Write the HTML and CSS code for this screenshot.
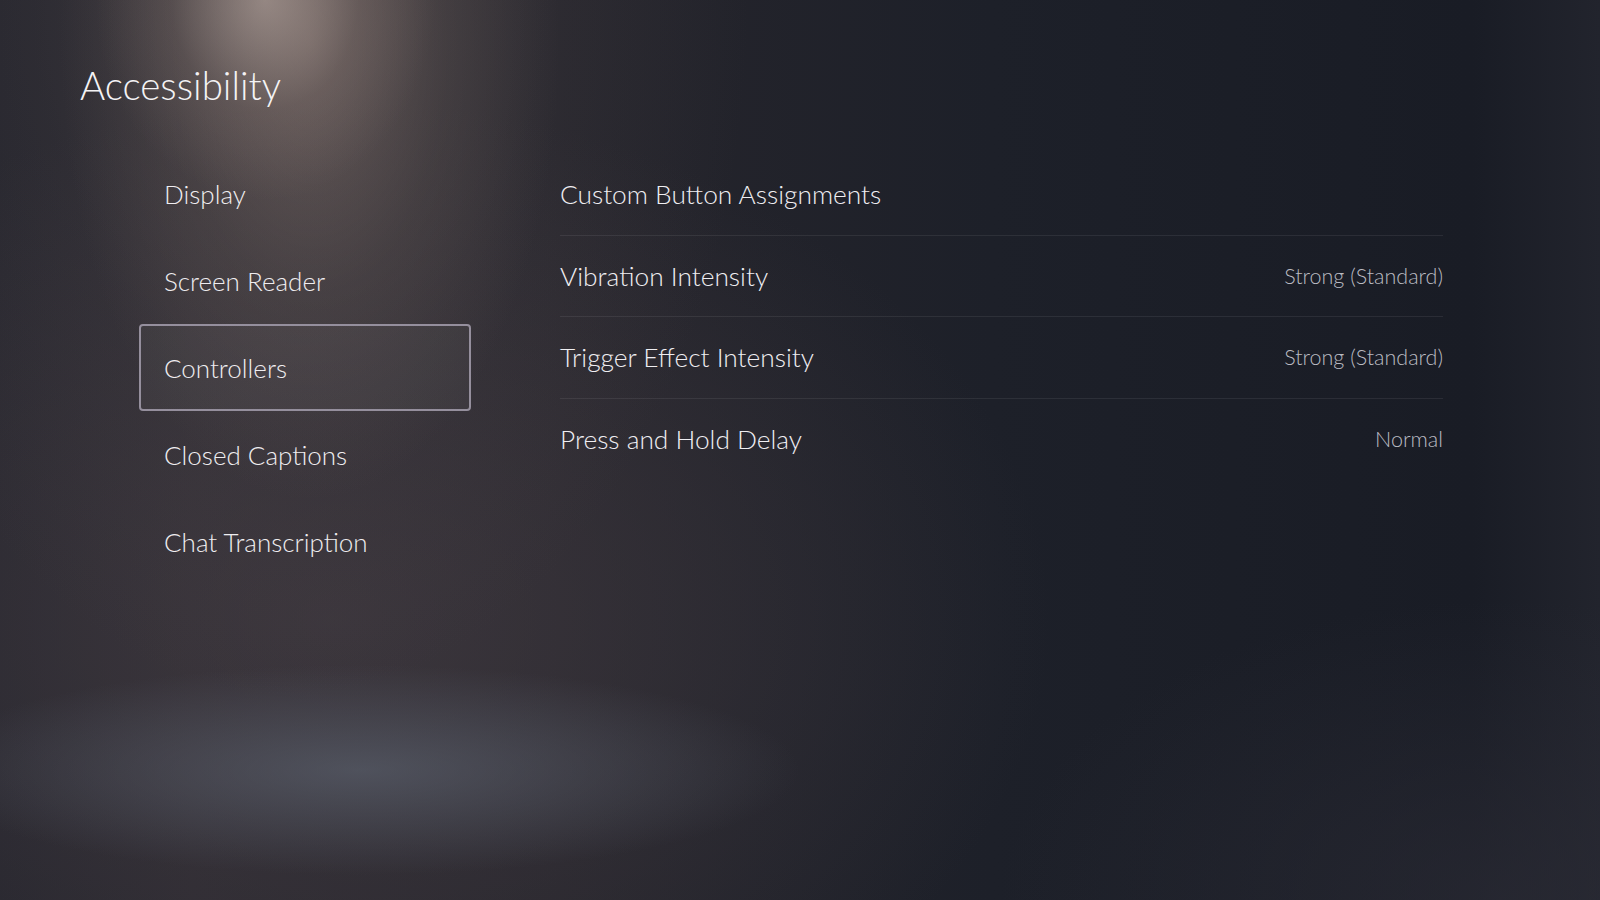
FILE: index.html
```html
<!DOCTYPE html>
<html lang="en">
<head>
<meta charset="utf-8">
<title>Accessibility</title>
<link rel="stylesheet" href="styles.css">
</head>
<body>
<div class="screen">
  <h1 class="title">Accessibility</h1>
  <div class="content">
    <nav class="menu">
      <div class="menu-item">Display</div>
      <div class="menu-item">Screen Reader</div>
      <div class="menu-item selected">Controllers</div>
      <div class="menu-item">Closed Captions</div>
      <div class="menu-item">Chat Transcription</div>
    </nav>
    <div class="settings">
      <div class="row"><span class="label">Custom Button Assignments</span></div>
      <div class="row"><span class="label">Vibration Intensity</span><span class="value">Strong (Standard)</span></div>
      <div class="row"><span class="label">Trigger Effect Intensity</span><span class="value">Strong (Standard)</span></div>
      <div class="row last"><span class="label">Press and Hold Delay</span><span class="value">Normal</span></div>
    </div>
  </div>
</div>
</body>
</html>
```

FILE: styles.css
```css
html, body {
  margin: 0;
  padding: 0;
}

body {
  background: #1b1e27;
  font-family: "Lato", "Open Sans", "Noto Sans", sans-serif;
  font-weight: 300;
  color: #ebeaee;
}

.screen {
  width: 1600px;
  height: 900px;
  overflow: hidden;
  background:
    radial-gradient(ellipse 170px 200px at 265px 0px, rgba(195, 178, 170, 0.55), rgba(150, 132, 126, 0.2) 55%, rgba(0, 0, 0, 0) 100%),
    radial-gradient(ellipse 250px 460px at 310px 40px, rgba(135, 118, 112, 0.55), rgba(110, 98, 94, 0.25) 55%, rgba(0, 0, 0, 0) 100%),
    radial-gradient(ellipse 460px 700px at 290px 0px, rgba(110, 98, 96, 0.32), rgba(90, 82, 84, 0.14) 55%, rgba(0, 0, 0, 0) 100%),
    radial-gradient(ellipse 440px 105px at 360px 770px, rgba(100, 108, 122, 0.55), rgba(0, 0, 0, 0) 100%),
    radial-gradient(ellipse 720px 520px at 330px 620px, rgba(72, 64, 70, 0.6), rgba(0, 0, 0, 0) 100%),
    radial-gradient(ellipse 500px 300px at 1500px 900px, rgba(45, 45, 55, 0.6), rgba(0, 0, 0, 0) 100%),
    linear-gradient(90deg, #25252d 0%, #2b2930 12%, #26252c 35%, #1d2029 62%, #191c25 92%, #22242d 100%);
}

.title {
  margin: 0;
  padding: 62px 0 0 80px;
  font-size: 38.5px;
  line-height: 47px;
  font-weight: 300;
  color: #f4f3f5;
}

.content {
  display: flex;
  align-items: flex-start;
  margin-top: 41px;
  padding-left: 139px;
  gap: 89px;
}

.menu {
  display: flex;
  flex-direction: column;
  width: 332px;
}

.menu-item {
  display: flex;
  align-items: center;
  height: 87px;
  box-sizing: border-box;
  padding-left: 23px;
  border: 2px solid transparent;
  border-radius: 4px;
  font-size: 26px;
  color: #efedf0;
}

.menu-item.selected {
  border-color: #958f9d;
  background: rgba(255, 255, 255, 0.035);
}

.settings {
  display: flex;
  flex-direction: column;
  width: 883px;
  margin-top: 4px;
}

.row {
  display: flex;
  align-items: center;
  justify-content: space-between;
  height: 81.5px;
  box-sizing: border-box;
  border-bottom: 1px solid rgba(255, 255, 255, 0.075);
}

.row.last {
  border-bottom: none;
}

.label {
  font-size: 26.3px;
  color: #efeef2;
}

.value {
  font-size: 21.5px;
  color: #babbc2;
}
```
